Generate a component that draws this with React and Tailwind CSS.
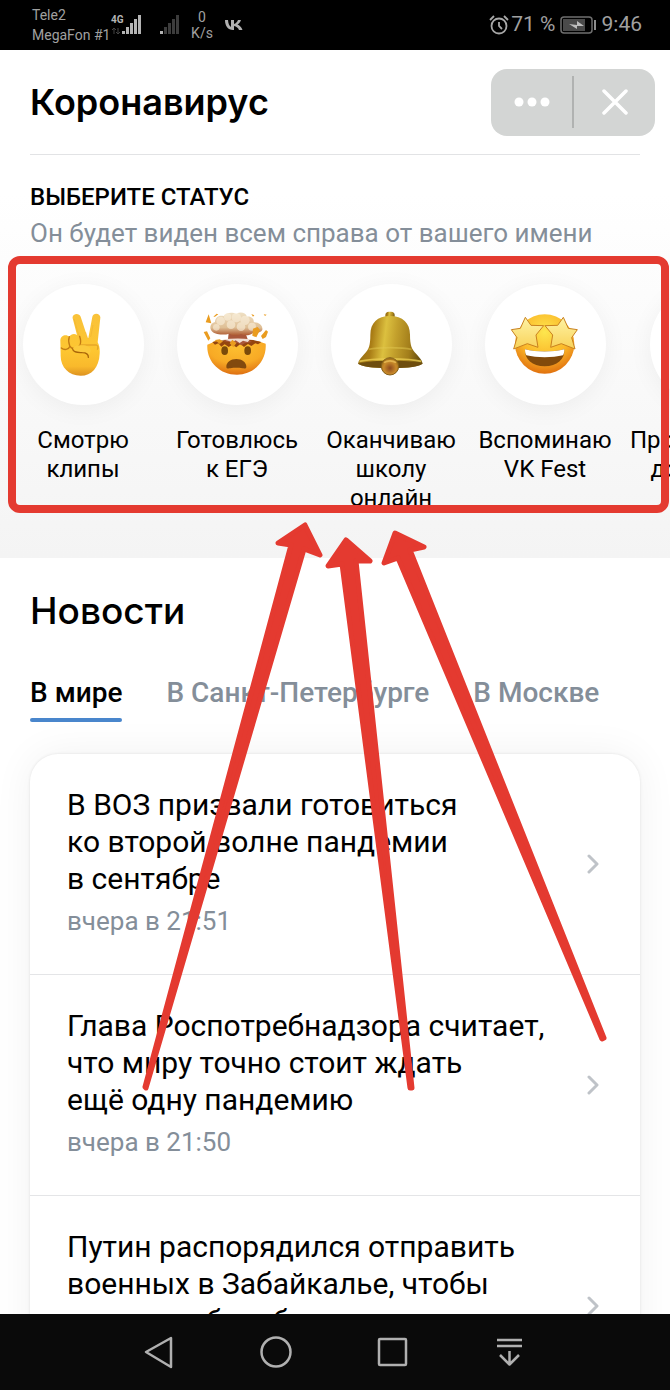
import React, { useState } from "react";

function PeaceHand() {
  return (
    <svg viewBox="33 54 192 192" className="h-16 w-16" aria-hidden="true">
      <defs>
        <linearGradient id="handSkin" x1="0" y1="0" x2="0" y2="1">
          <stop offset="0" stopColor="#f9c23a" />
          <stop offset="0.6" stopColor="#fdc631" />
          <stop offset="0.85" stopColor="#f9b92c" />
          <stop offset="1" stopColor="#dd9220" />
        </linearGradient>
      </defs>
      <path
        d="M98 70c-3-14 19-19 24-5l21 64h2l12-64c3-14 25-11 24 3l-8 74c5 9 7 20 6 34-2 42-24 66-57 66-36 0-61-26-60-62l-1-44c1-17 19-19 27-11 5-8 15-10 23-5z"
        fill="url(#handSkin)"
      />
      <path d="M102 72l20 68M143 129l-6-18M152 126l7-36" stroke="#e3a028" strokeWidth="3" fill="none" opacity="0.3" />
      <path
        d="M64 159c8 7 22 6 26-5 5 9 22 9 28-2M88 125c-3 8-2 19 1 27M119 124c3 9 4 19 1 26"
        stroke="#c37b13"
        strokeWidth="4"
        fill="none"
        strokeLinecap="round"
      />
      <path d="M120 150h49c4 0 7 8 3 14" stroke="#dc9722" strokeWidth="3" fill="none" />
      <path
        d="M98 161c3-8 15-11 28-10 14 0 25 5 26 13 1 10-6 13-6 22 0-9-8-14-18-14-16 0-31 0-30-11z"
        fill="#fcca3d"
      />
      <path
        d="M98 162c1 11 16 10 29 11 11 0 19 5 18 14"
        stroke="#a96509"
        strokeWidth="4"
        fill="none"
        strokeLinecap="round"
      />
    </svg>
  );
}

function ExplodingHead() {
  return (
    <svg viewBox="106 127 192 192" className="h-16 w-16 overflow-visible" aria-hidden="true">
      <defs>
        <radialGradient id="faceOrange" cx="0.5" cy="0.2" r="0.8">
          <stop offset="0" stopColor="#fdbf30" />
          <stop offset="0.6" stopColor="#f8aa25" />
          <stop offset="1" stopColor="#de7012" />
        </radialGradient>
        <linearGradient id="cloudTone" x1="0" y1="0" x2="0" y2="1">
          <stop offset="0" stopColor="#efe0c4" />
          <stop offset="0.65" stopColor="#dfbf95" />
          <stop offset="1" stopColor="#ac552c" />
        </linearGradient>
      </defs>
      <path
        d="M113 222l14-6 12-8 18 3 18 6 17-6 18 7 20-7 18 5 18-4 22 7c4 51-34 93-86 93s-92-40-89-90z"
        fill="url(#faceOrange)"
      />
      <path
        d="M128 214l8 8 10-4 9 10 10-7 12 8 11-7 12 8 12-10 11 9 12-9 10 6 12-8 8 3 10-7-24-6-60-4z"
        fill="#94450f"
      />
      <path d="M177 186h50l8 22 12 6-22 4-10 6-12-8-12 7-8-8-20-3 12-6z" fill="#a9573a" />
      <path d="M158 206c30-3 58-4 84 0l-8 8-14-4-10 7-12-8-10 6-12-5z" fill="#f0ddd2" />
      <path
        d="M124 178c-6-12 2-22 12-24 0-14 12-22 26-18 8-12 28-12 38-6 12-8 28-4 32 8 14-2 22 8 20 17 16-1 28 10 26 22-2 8-16 10-28 10-10 9-28 8-36 3-12 7-26 6-34-1-16 4-46 6-56-11z"
        fill="url(#cloudTone)"
      />
      <g fill="#fbf0dc" opacity="0.6">
        <circle cx="153" cy="151" r="13" />
        <circle cx="174" cy="139" r="11" />
        <circle cx="200" cy="141" r="14" />
        <circle cx="226" cy="149" r="14" />
        <circle cx="184" cy="162" r="13" />
        <circle cx="214" cy="168" r="13" />
        <circle cx="140" cy="170" r="10" />
        <circle cx="247" cy="168" r="12" />
      </g>
      <path
        d="M108 155l9-24 8 27zM102 184l10-2 10 21-6 7zM131 138l10-9 5 2-10 7zM250 174l14-5 7 9-11 22-12-5zM274 196l15-18 6 5-6 16-10 6zM245 130l9 4-4 4zM282 131l9 1-5 4zM180 218l8-11 12 10-9 13zM136 208l14-2 10 6-10 8z"
        fill="#ea9c1f"
      />
      <ellipse cx="165" cy="240" rx="10" ry="13" fill="#7b4a0a" />
      <ellipse cx="234" cy="240" rx="10" ry="13" fill="#7b4a0a" />
      <path d="M170 288c0-13 13-23 30-23s30 10 30 23c0 6-5 6-12 5-12-2-24-2-36 0-7 1-12 1-12-5z" fill="#82490e" />
    </svg>
  );
}

function Bell() {
  return (
    <svg viewBox="120 127 192 192" className="h-16 w-16 overflow-visible" aria-hidden="true">
      <defs>
        <linearGradient id="brass" x1="0" y1="0" x2="1" y2="0.1">
          <stop offset="0" stopColor="#8d6912" />
          <stop offset="0.25" stopColor="#a97c15" />
          <stop offset="0.45" stopColor="#dcc03f" />
          <stop offset="0.62" stopColor="#c3a02c" />
          <stop offset="0.85" stopColor="#a27d1a" />
          <stop offset="1" stopColor="#705511" />
        </linearGradient>
        <radialGradient id="clapper" cx="0.5" cy="0.6" r="0.6">
          <stop offset="0" stopColor="#8e4a1d" />
          <stop offset="0.6" stopColor="#c98a2a" />
          <stop offset="1" stopColor="#9a6f17" />
        </radialGradient>
      </defs>
      <rect x="199" y="123" width="28" height="24" rx="11" fill="url(#brass)" />
      <path
        d="M213 136c-38 0-59 21-59 56 0 32-4 44-18 58-9 10-17 18-19 29 24 13 60 13 97 13s74 0 97-13c-2-11-10-19-19-29-14-14-19-26-19-58 0-35-22-56-60-56z"
        fill="url(#brass)"
      />
      <path d="M117 279c28-8 58-9 97-9s70 1 97 9c-24 13-60 13-97 13s-73 0-97-13z" fill="#6e4d0e" />
      <path d="M149 236c30-7 98-7 129 0" stroke="#e2c750" strokeWidth="5" fill="none" opacity="0.5" />
      <path d="M121 272c40-10 146-10 186 0" stroke="#e8cb50" strokeWidth="5" fill="none" opacity="0.8" />
      <circle cx="213" cy="287" r="26" fill="url(#clapper)" stroke="#86601a" strokeWidth="3" />
      <path d="M195 276c10-7 26-7 36 0" stroke="#e2b34e" strokeWidth="5" fill="none" />
    </svg>
  );
}

function StarEyes() {
  const star = "M170 200l17 24 38 1-23 28 6 37-32-11-41 16 10-34-17-24 27-4z";
  return (
    <svg viewBox="133 187 192 192" className="h-16 w-16 overflow-visible" aria-hidden="true">
      <defs>
        <radialGradient id="grinFace" cx="0.5" cy="0.3" r="0.7">
          <stop offset="0" stopColor="#fde64e" />
          <stop offset="0.6" stopColor="#fbb829" />
          <stop offset="1" stopColor="#e1720f" />
        </radialGradient>
        <linearGradient id="starTone" x1="0" y1="0" x2="0" y2="1">
          <stop offset="0" stopColor="#fef3a4" />
          <stop offset="1" stopColor="#f8d259" />
        </linearGradient>
      </defs>
      <circle cx="228" cy="280" r="89" fill="url(#grinFace)" />
      <path d="M169 296c34 9 84 9 118 0 2 30-22 51-59 51s-61-21-59-51z" fill="#824a0b" />
      <path d="M169 296c34 9 84 9 118 0 0 8-1 13-4 18-32 8-78 8-110 0-3-5-4-10-4-18z" fill="#fff" />
      <path d={star} fill="url(#starTone)" stroke="#c9811f" strokeWidth="3" strokeLinejoin="round" />
      <path
        d={star}
        transform="matrix(-1 0 0 1 454 0)"
        fill="url(#starTone)"
        stroke="#c9811f"
        strokeWidth="3"
        strokeLinejoin="round"
      />
    </svg>
  );
}

const statuses = [
  { lines: ["Смотрю", "клипы"], icon: <PeaceHand /> },
  { lines: ["Готовлюсь", "к ЕГЭ"], icon: <ExplodingHead /> },
  { lines: ["Оканчиваю", "школу", "онлайн"], icon: <Bell /> },
  { lines: ["Вспоминаю", "VK Fest"], icon: <StarEyes /> },
  { lines: ["Провожу день", "дома один"], icon: null },
];

const tabs = ["В мире", "В Санкт-Петербурге", "В Москве"];

const news = [
  { lines: ["В ВОЗ призвали готовиться", "ко второй волне пандемии", "в сентябре"], date: "вчера в 21:51" },
  { lines: ["Глава Роспотребнадзора считает,", "что миру точно стоит ждать", "ещё одну пандемию"], date: "вчера в 21:50" },
  { lines: ["Путин распорядился отправить", "военных в Забайкалье, чтобы", "помочь в борьбе с вирусом"], date: "вчера в 21:48" },
];

function Signal({ level, network }) {
  return (
    <svg viewBox="0 0 34 26" className="h-[26px] w-[34px]" aria-hidden="true">
      {network && (
        <>
          <text x="1" y="11" fontSize="10" fontWeight="700" fill="#b4b4b4">
            4G
          </text>
          <path d="M4 22v-6m-2 2l2-2 2 2M8 16v6m-2-2l2 2 2-2" stroke="#444" fill="none" />
        </>
      )}
      {[3, 7, 11, 15, 19].map((h, i) => (
        <rect key={h} x={12 + i * 4} y={22 - h} width="3" height={h} fill={i < level ? "#b4b4b4" : "#3c3c3c"} />
      ))}
    </svg>
  );
}

function StatusBar() {
  return (
    <div className="flex h-[50px] shrink-0 items-center justify-between bg-black pr-7 pl-8 text-[#a0a0a0]">
      <div className="flex items-center">
        <div className="w-[78px] text-sm leading-5 whitespace-nowrap">
          <p>Tele2</p>
          <p>MegaFon #1</p>
        </div>
        <Signal level={5} network />
        <div className="ml-1">
          <Signal level={1} />
        </div>
        <div className="ml-1 w-8 text-center text-sm leading-4">
          <p>0</p>
          <p>K/s</p>
        </div>
        <svg viewBox="0 0 20 12" className="ml-1.5 h-3 w-5" aria-label="VK">
          <path
            d="M1 1h3c.3 4 1.500 6 3 7V1h3v4c2-.5 3-2 4-4h3c-.7 2-2 3.500-3.500 4.500C15.500 6.500 17.500 8 18.500 11H15c-.8-2-2.500-3.500-5-4v4H9C4 11 1 7 1 1z"
            fill="#b0b0b0"
          />
        </svg>
      </div>
      <div className="flex items-center text-[21px]">
        <svg viewBox="0 0 20 20" className="h-5 w-5" fill="none" stroke="#a8a8a8" strokeWidth="1.800" aria-hidden="true">
          <circle cx="10" cy="11" r="7.500" />
          <path d="M10 7v4l3 3M1 5l4-4M19 5l-4-4" />
        </svg>
        <span className="ml-0.5">71 %</span>
        <svg viewBox="0 0 38 20" className="ml-1 h-5 w-[38px]" aria-hidden="true">
          <rect x="1" y="2" width="31" height="16" rx="3" fill="none" stroke="#6f6f6f" strokeWidth="1.500" />
          <rect x="3" y="4" width="22" height="12" fill="#4a4a4a" />
          <path d="M9 9l8 1V6l7 5-7 0v3z" fill="#bdbdbd" />
          <rect x="34" y="5" width="2" height="10" fill="#8d8d8d" />
        </svg>
        <span className="ml-1">9:46</span>
      </div>
    </div>
  );
}

function Header() {
  return (
    <header className="flex h-[104px] shrink-0 items-center justify-between pr-[15px] pl-[30px]">
      <h1 className="font-['Inter',sans-serif] text-[36px] font-semibold">Коронавирус</h1>
      <div className="flex h-[67px] w-[164px] items-center rounded-2xl bg-[#d3d5d4]">
        <button type="button" aria-label="Меню" className="flex flex-1 justify-center">
          <svg viewBox="0 0 36 10" className="h-2.5 w-9" fill="#fff">
            <circle cx="5" cy="5" r="4.500" />
            <circle cx="18" cy="5" r="4.500" />
            <circle cx="31" cy="5" r="4.500" />
          </svg>
        </button>
        <div className="h-[52px] w-0.5 bg-[#b0b2b1]" />
        <button type="button" aria-label="Закрыть" className="flex flex-1 justify-center">
          <svg viewBox="0 0 26 26" className="h-[26px] w-[26px]" stroke="#fff" strokeWidth="3.500" strokeLinecap="round">
            <path d="M2 2l22 22M24 2L2 24" />
          </svg>
        </button>
      </div>
    </header>
  );
}

function StatusPicker() {
  return (
    <section className="h-[404px] shrink-0 overflow-hidden bg-linear-to-b from-white from-10% to-[#f4f4f4]">
      <div className="mx-[30px] border-t border-[#e2e3e5] pt-6">
        <h2 className="text-2xl leading-9 font-medium uppercase">Выберите статус</h2>
        <p className="text-[26px] leading-9 whitespace-nowrap text-[#848e99]">
          Он будет виден всем справа от вашего имени
        </p>
      </div>
      <ul className="mt-[33px] flex pl-1.5">
        {statuses.map((s) => (
          <li key={s.lines[0]} className="min-w-[154px] shrink-0">
            <button type="button" className="flex w-full flex-col items-center">
              <span className="flex h-[121px] w-[121px] items-center justify-center rounded-full bg-white shadow-[0_4px_24px_rgba(0,0,0,0.05)]">
                {s.icon}
              </span>
              <span className="mt-[21px] px-2 text-2xl leading-[29px] whitespace-nowrap">
                {s.lines.map((line) => (
                  <span key={line} className="block">
                    {line}
                  </span>
                ))}
              </span>
            </button>
          </li>
        ))}
      </ul>
    </section>
  );
}

function News() {
  const [active, setActive] = useState(tabs[0]);

  return (
    <section className="px-[30px]">
      <h2 className="pt-[29px] font-['Inter',sans-serif] text-[37px] leading-[48px] font-medium">Новости</h2>
      <div className="mt-10 flex gap-11 text-[28px] leading-9 font-medium whitespace-nowrap">
        {tabs.map((tab) => (
          <button
            key={tab}
            type="button"
            onClick={() => setActive(tab)}
            className={
              tab === active
                ? "relative pb-[11px] text-black after:absolute after:inset-x-0 after:bottom-0 after:h-1 after:rounded-full after:bg-[#4986cc]"
                : "pb-[11px] text-[#848e99]"
            }
          >
            {tab}
          </button>
        ))}
      </div>
      <ul className="mt-8 rounded-[28px] bg-white shadow-[0_0_40px_rgba(0,0,0,0.06),0_0_3px_rgba(0,0,0,0.1)]">
        {news.map((item) => (
          <li key={item.lines[0]} className="border-b border-[#e4e5e7]">
            <a href="#news" className="flex items-center justify-between py-8 pr-[41px] pl-[37px]">
              <div className="pb-[5px] whitespace-nowrap">
                <h3 className="text-[30px] leading-[37px]">
                  {item.lines.map((line) => (
                    <span key={line} className="block">
                      {line}
                    </span>
                  ))}
                </h3>
                <p className="mt-2 text-[26px] leading-8 text-[#848e99]">{item.date}</p>
              </div>
              <svg viewBox="0 0 12 20" className="h-5 w-3" fill="none" stroke="#bfc3c8" strokeWidth="3" strokeLinecap="round" strokeLinejoin="round">
                <path d="M2 2l8 8-8 8" />
              </svg>
            </a>
          </li>
        ))}
      </ul>
    </section>
  );
}

function NavBar() {
  const items = [
    { label: "Назад", shape: <path d="M32 6v29L7 20z" /> },
    { label: "Домой", shape: <circle cx="20" cy="20" r="14.500" /> },
    { label: "Недавние", shape: <rect x="6" y="7" width="27" height="26" rx="1" /> },
    { label: "Уведомления", shape: <path d="M7 8h25M7 14h25M19.500 19v13M10 23l9.500 9.500L29 23" /> },
  ];
  return (
    <nav className="z-20 flex h-[76px] shrink-0 items-center justify-center bg-[#0a0a0a] pr-0.5">
      {items.map((item) => (
        <button key={item.label} type="button" aria-label={item.label} className="flex w-[117px] justify-center">
          <svg viewBox="0 0 40 40" className="h-10 w-10" fill="none" stroke="#b0b0b0" strokeWidth="2.500" strokeLinejoin="round">
            {item.shape}
          </svg>
        </button>
      ))}
    </nav>
  );
}

// Hand-drawn marks that lie over the screen
function Annotations() {
  return (
    <div className="pointer-events-none absolute inset-0 z-10">
      <div className="absolute top-[256px] right-px left-2 h-[257px] rounded-xl border-8 border-[#e43a30]" />
      <svg
        viewBox="0 0 670 1390"
        className="absolute top-0 left-0 h-[1390px] w-[670px]"
        fill="#e43a30"
        stroke="#e43a30"
        strokeWidth="5"
        strokeLinejoin="round"
      >
        <path d="M305 525L320 555L304 549L146 1088L145 1087L291 545L278 543Z" />
        <path d="M346 540L370 561L356 561L412 1088L410 1088L342 564L328 566Z" />
        <path d="M395 533L424 547L410 550L604 1038L602 1039L398 558L384 563Z" />
      </svg>
    </div>
  );
}

export default function App() {
  return (
    <div className="relative flex h-screen flex-col overflow-hidden bg-white font-['Roboto',sans-serif] text-black">
      <StatusBar />
      <main className="flex min-h-0 flex-1 flex-col overflow-hidden">
        <Header />
        <StatusPicker />
        <News />
      </main>
      <Annotations />
      <NavBar />
    </div>
  );
}
